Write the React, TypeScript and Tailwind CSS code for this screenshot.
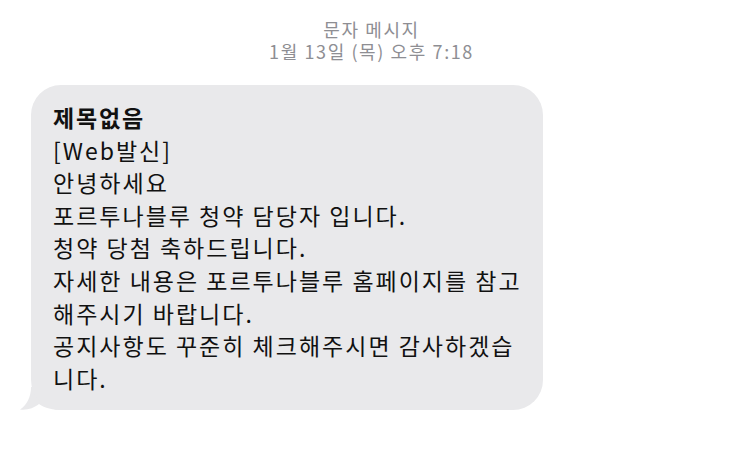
import React from 'react';

const lines = [
    '[Web발신]',
    '안녕하세요',
    '포르투나블루 청약 담당자 입니다.',
    '청약 당첨 축하드립니다.',
    '자세한 내용은 포르투나블루 홈페이지를 참고',
    '해주시기 바랍니다.',
    '공지사항도 꾸준히 체크해주시면 감사하겠습',
    '니다.',
];

const font = { fontFamily: '"Noto Sans CJK KR", "Noto Sans", sans-serif' };

const App: React.FC = () => {
    return (
        <div className="w-[743px] h-[454px] bg-white overflow-hidden" style={font}>
            <div className="pt-[18px] text-center text-[18px] leading-[22px] tracking-[1.6px] text-[#8e8e93]">
                <div>문자 메시지</div>
                <div>1월 13일 (목) 오후 7:18</div>
            </div>
            <div className="pl-[31px] pt-[23px]">
                <div className="relative w-[512px]">
                    <div className="relative z-10 bg-[#e9e9eb] rounded-[30px] pl-[22px] pr-4 pt-[16px] pb-[16px] text-[23px] leading-[32.6px] tracking-[2px] text-[#111111] whitespace-nowrap">
                        <div className="font-bold tracking-[1.8px]">제목없음</div>
                        {lines.map((l, i) => (
                            <div key={i}>{l}</div>
                        ))}
                    </div>
                    <svg className="absolute left-[-12px] bottom-[-1px] z-0" width="50" height="24" viewBox="0 0 50 24">
                        <path d="M12 0 C12 10 8 18 1 22.5 C8 23.5 15 21 20 17 C26 21 33 23 45 23 L45 0 Z" fill="#e9e9eb" />
                    </svg>
                </div>
            </div>
        </div>
    );
};

export default App;
